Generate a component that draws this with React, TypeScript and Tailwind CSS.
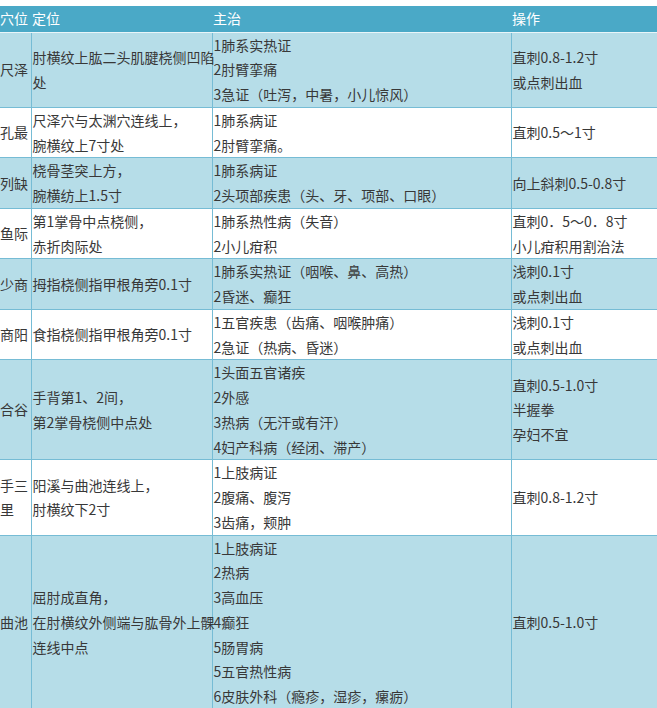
import React from "react";

type Row = { name: string[]; loc: string[]; main: string[]; op: string[]; blue: boolean };

const rows: Row[] = [
  {
    name: ["尺泽"],
    loc: ["肘横纹上肱二头肌腱桡侧凹陷", "处"],
    main: ["1肺系实热证", "2肘臂挛痛", "3急证（吐泻，中暑，小儿惊风）"],
    op: ["直刺0.8-1.2寸", "或点刺出血"],
    blue: true,
  },
  {
    name: ["孔最"],
    loc: ["尺泽穴与太渊穴连线上，", "腕横纹上7寸处"],
    main: ["1肺系病证", "2肘臂挛痛。"],
    op: ["直刺0.5～1寸"],
    blue: false,
  },
  {
    name: ["列缺"],
    loc: ["桡骨茎突上方，", "腕横纺上1.5寸"],
    main: ["1肺系病证", "2头项部疾患（头、牙、项部、口眼）"],
    op: ["向上斜刺0.5-0.8寸"],
    blue: true,
  },
  {
    name: ["鱼际"],
    loc: ["第1掌骨中点桡侧，", "赤折肉际处"],
    main: ["1肺系热性病（失音）", "2小儿疳积"],
    op: ["直刺0．5～0．8寸", "小儿疳积用割治法"],
    blue: false,
  },
  {
    name: ["少商"],
    loc: ["拇指桡侧指甲根角旁0.1寸"],
    main: ["1肺系实热证（咽喉、鼻、高热）", "2昏迷、癫狂"],
    op: ["浅刺0.1寸", "或点刺出血"],
    blue: true,
  },
  {
    name: ["商阳"],
    loc: ["食指桡侧指甲根角旁0.1寸"],
    main: ["1五官疾患（齿痛、咽喉肿痛）", "2急证（热病、昏迷）"],
    op: ["浅刺0.1寸", "或点刺出血"],
    blue: false,
  },
  {
    name: ["合谷"],
    loc: ["手背第1、2间，", "第2掌骨桡侧中点处"],
    main: ["1头面五官诸疾", "2外感", "3热病（无汗或有汗）", "4妇产科病（经闭、滞产）"],
    op: ["直刺0.5-1.0寸", "半握拳", "孕妇不宜"],
    blue: true,
  },
  {
    name: ["手三", "里"],
    loc: ["阳溪与曲池连线上，", "肘横纹下2寸"],
    main: ["1上肢病证", "2腹痛、腹泻", "3齿痛，颊肿"],
    op: ["直刺0.8-1.2寸"],
    blue: false,
  },
  {
    name: ["曲池"],
    loc: ["屈肘成直角，", "在肘横纹外侧端与肱骨外上髁", "连线中点"],
    main: ["1上肢病证", "2热病", "3高血压", "4癫狂", "5肠胃病", "5五官热性病", "6皮肤外科（瘾疹，湿疹，瘰疬）"],
    op: ["直刺0.5-1.0寸"],
    blue: true,
  },
];

function Lines({ lines }: { lines: string[] }) {
  return (
    <>
      {lines.map((l, i) => (
        <div key={i} className="whitespace-nowrap">
          {l}
        </div>
      ))}
    </>
  );
}

export default function App() {
  return (
    <div
      className="w-[657px] h-[708px] overflow-hidden bg-white pt-[6px] text-[14px] leading-[24.75px] text-[#383838]"
      style={{ fontFamily: '"Noto Sans CJK SC", "Liberation Sans", sans-serif' }}
    >
      <table className="table-fixed border-collapse w-[680px]">
        <colgroup>
          <col className="w-[31px]" />
          <col className="w-[181px]" />
          <col className="w-[299px]" />
          <col className="w-[169px]" />
        </colgroup>
        <thead>
          <tr className="bg-[#4aa9c7] text-white h-[26px]">
            <th className="text-left font-normal pl-0 border-b border-[#e9f5f9] whitespace-nowrap">穴位</th>
            <th className="text-left font-normal pl-[1px] border-b border-[#e9f5f9]">定位</th>
            <th className="text-left font-normal pl-[1px] border-b border-[#e9f5f9]">主治</th>
            <th className="text-left font-normal pl-[1px] border-b border-[#e9f5f9]">操作</th>
          </tr>
        </thead>
        <tbody>
          {rows.map((r, i) => (
            <tr key={i} className={r.blue ? "bg-[#b6dde8]" : "bg-white"}>
              <td className="align-middle p-0 border-b border-r border-[#76bcd5] overflow-hidden">
                <Lines lines={r.name} />
              </td>
              <td className="align-middle p-0 pl-[1px] border-b border-r border-[#76bcd5]">
                <Lines lines={r.loc} />
              </td>
              <td className="align-middle p-0 pl-[1px] border-b border-r border-[#76bcd5]">
                <Lines lines={r.main} />
              </td>
              <td className="align-middle p-0 pl-[1px] border-b border-[#76bcd5]">
                <Lines lines={r.op} />
              </td>
            </tr>
          ))}
        </tbody>
      </table>
    </div>
  );
}
